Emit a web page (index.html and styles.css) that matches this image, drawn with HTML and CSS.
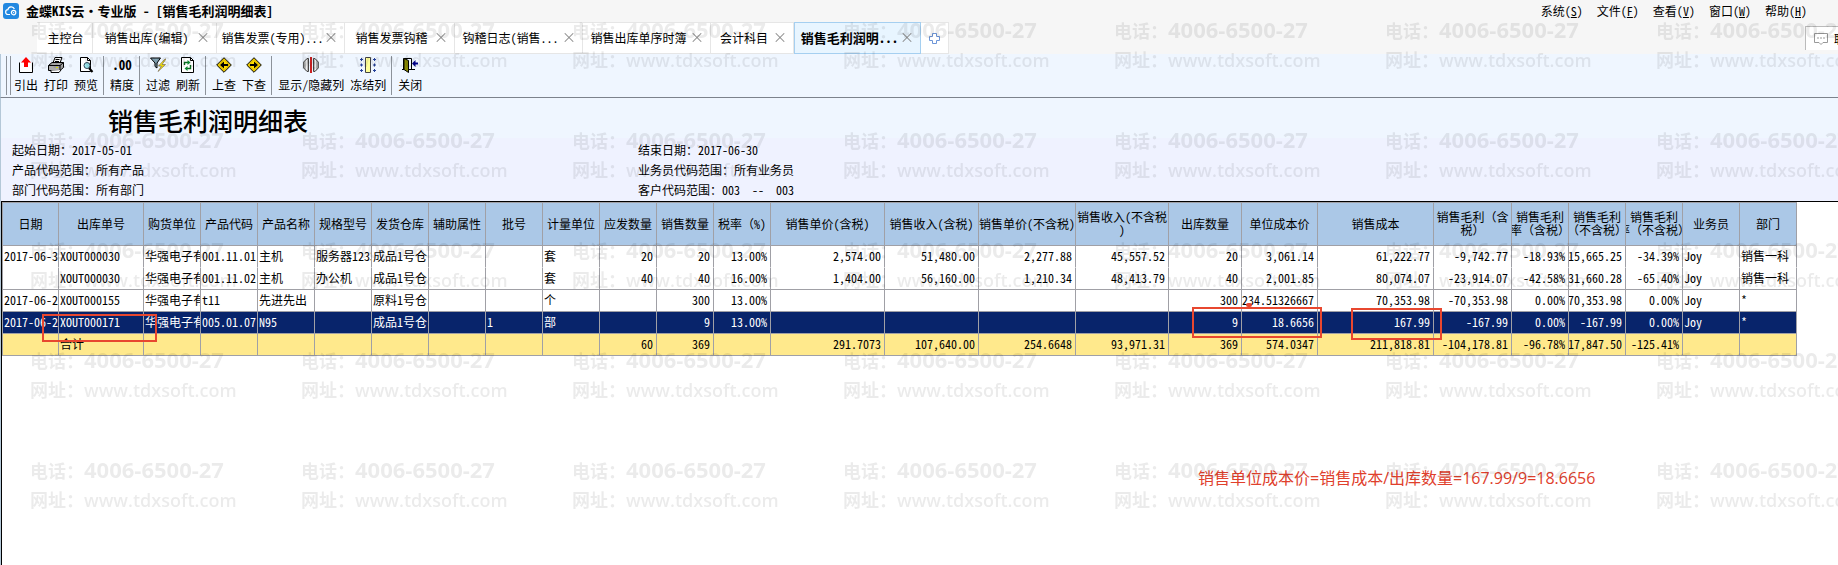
FILE: index.html
```
<!DOCTYPE html>
<html lang="zh-CN">
<head>
    <meta charset="UTF-8">
    <meta name="viewport" content="width=device-width, initial-scale=1.0">
    <title>销售毛利润明细表</title>
    <link rel="stylesheet" href="styles.css">
</head>
<body>
    <header class="titlebar">
        <svg class="logo" width="16" height="16" viewBox="0 0 16 16">
            <rect width="16" height="16" rx="3" fill="#2288e0"/>
            <path d="M7 11.5H5.2a2.4 2.4 0 0 1-.3-4.8A3.4 3.4 0 0 1 11.4 6" fill="none" stroke="#fff" stroke-width="1.2"/>
            <circle cx="10.6" cy="9.6" r="2.2" fill="none" stroke="#fff" stroke-width="1.2"/>
            <circle cx="10.6" cy="9.6" r="0.7" fill="#fff"/>
        </svg>
        <h1>金蝶KIS云<span class="fullwidth">・</span>专业版 - [销售毛利润明细表]</h1>
        <nav class="menu">
            <button>系统(<u>S</u>)</button>
            <button>文件(<u>F</u>)</button>
            <button>查看(<u>V</u>)</button>
            <button>窗口(<u>W</u>)</button>
            <button>帮助(<u>H</u>)</button>
        </nav>
    </header>

    <div class="tabbar">
        <div class="tabs">
            <div class="tab"><button class="tab-label">主控台</button></div>
            <div class="tab"><button class="tab-label">销售出库(编辑)</button><button class="tab-close" aria-label="关闭"></button></div>
            <div class="tab"><button class="tab-label">销售发票(专用)...</button><button class="tab-close" aria-label="关闭"></button></div>
            <div class="tab"><button class="tab-label">销售发票钩稽</button><button class="tab-close" aria-label="关闭"></button></div>
            <div class="tab"><button class="tab-label">钩稽日志(销售...</button><button class="tab-close" aria-label="关闭"></button></div>
            <div class="tab"><button class="tab-label">销售出库单序时簿</button><button class="tab-close" aria-label="关闭"></button></div>
            <div class="tab"><button class="tab-label">会计科目</button><button class="tab-close" aria-label="关闭"></button></div>
            <div class="tab active"><button class="tab-label">销售毛利润明...</button><button class="tab-close" aria-label="关闭"></button></div>
            <div class="tab">
                <button class="tab-new" aria-label="新建">
                    <svg width="11" height="11" viewBox="0 0 11 11"><path d="M3.5.5h4v3h3v4h-3v3h-4v-3h-3v-4h3z" fill="#fff" stroke="#6d95d8"/></svg>
                </button>
            </div>
        </div>
        <button class="contact">
            <svg width="14" height="12" viewBox="0 0 14 12"><path d="M.5.5h13v9H9L7 11.500 5 9.500H.5z" fill="#fff" stroke="#999"/><path d="M3 5h2M6 5h2M9 5h2" stroke="#999"/></svg>
            联系客服
        </button>
    </div>

    <div class="toolbar">
        <span class="grip"></span>
        <button>
            <svg width="16" height="16" viewBox="0 0 16 16"><path d="M1.500 5.500v10h13v-10" fill="#fff" stroke="#000"/><path d="M8 0l5 5.500h-3V10H6V5.500H3z" fill="#f00"/></svg>
            引出
        </button>
        <button>
            <svg width="16" height="16" viewBox="0 0 16 16"><path d="M5 6l2-5.500h7L12 6" fill="#fff" stroke="#000"/><path d="M7.500 2.500h4M7 4.500h4" stroke="#000"/><path d="M.5 8.500L4 5.500h11.500v5L12 13.500H.5z" fill="#aaa" stroke="#000"/><path d="M.5 8.500H12l3.500-3M12 8.500v5" fill="none" stroke="#000"/><path d="M3 13.500v2h8l2-2.500" fill="#fff" stroke="#000"/><path d="M8 10.500h2" stroke="#ee0"/></svg>
            打印
        </button>
        <button>
            <svg width="16" height="16" viewBox="0 0 16 16"><path d="M2.500.5h7l3 3v11h-10z" fill="#fff" stroke="#000"/><path d="M9.500.5v3h3" fill="none" stroke="#000"/><circle cx="9" cy="8.500" r="3" fill="#9de8ee" stroke="#345"/><path d="M11 11l3.500 4" stroke="#000" stroke-width="2"/></svg>
            预览
        </button>
        <span class="sep"></span>
        <button>
            <span class="decimals">.00</span>
            精度
        </button>
        <span class="sep"></span>
        <button>
            <svg width="16" height="16" viewBox="0 0 16 16"><path d="M.5 1h10L7 6v5L5 9.500V6z" fill="#8ab" stroke="#000"/><path d="M15 2L8.500 9h3L8 14.500 15.500 7.500h-3.500L16 2z" fill="#fe0" stroke="#765" stroke-width="0.7"/></svg>
            过滤
        </button>
        <button>
            <svg width="16" height="16" viewBox="0 0 16 16"><path d="M1.500.5h9l3 3v12h-12z" fill="#fff" stroke="#000"/><path d="M10.500.5v3h3" fill="none" stroke="#000"/><path d="M4.500 8V5.500h4M10.500 8v3.500h-4" fill="none" stroke="#0a6a20" stroke-width="1.400"/><path d="M7.500 3l3 2.500-3 2.500zM7.500 9l-3 2.500 3 2.500z" fill="#0a8a30"/></svg>
            刷新
        </button>
        <span class="sep"></span>
        <button>
            <svg width="16" height="16" viewBox="0 0 16 16"><path d="M8 .7L15.300 8 8 15.300.7 8z" fill="#fd0" stroke="#000"/><path d="M8 2.500L13.500 8 8 13.500 2.500 8z" fill="none" stroke="#a80" stroke-width="0.600"/><path d="M4 8l4-3.500V7h4v2H8v2.500z"/></svg>
            上查
        </button>
        <button>
            <svg width="16" height="16" viewBox="0 0 16 16"><path d="M8 .7L15.300 8 8 15.300.7 8z" fill="#fd0" stroke="#000"/><path d="M8 2.500L13.500 8 8 13.500 2.500 8z" fill="none" stroke="#a80" stroke-width="0.600"/><path d="M12 8L8 4.500V7H4v2h4v2.500z"/></svg>
            下查
        </button>
        <span class="sep"></span>
        <button>
            <svg width="16" height="16" viewBox="0 0 16 16"><path d="M5.500 1.500v13H4L.7 11V5L4 1.500zM10.500 1.500v13H12l3.300-3.500V5L12 1.500z" fill="#bbb" stroke="#444"/><path d="M3.500 3v10M12.500 3v10" stroke="#eee"/><path d="M8 0v16" stroke="#c22" stroke-width="2"/></svg>
            显示/隐藏列
        </button>
        <button>
            <svg width="16" height="16" viewBox="0 0 16 16"><path d="M5.500.5h5v15h-5z" fill="#ff9" stroke="#444"/><path d="M0 2.500h3M1.500 1v3M0 8h3M1.500 6.500v3M0 13.500h3M1.500 12v3M13 2.500h3M14.500 1v3M13 8h3M14.500 6.500v3M13 13.500h3M14.500 12v3" stroke="#24409a"/></svg>
            冻结列
        </button>
        <span class="sep"></span>
        <button>
            <svg width="16" height="16" viewBox="0 0 16 16"><path d="M1.500 12.500V1.500h8v11M0 12.500h2M7 12.500h6" fill="none" stroke="#000"/><path d="M2 1.500l4.500 2V15.500L2 12.500z" fill="#880" stroke="#000"/><path d="M10 6.500l3.500-3.500v2.500H16v2h-2.500V10z" fill="#008"/></svg>
            关闭
        </button>
    </div>

    <main class="report">
        <div class="report-head">
            <h2>销售毛利润明细表</h2>
            <div class="params">
                <p>起始日期：2017-05-01</p>
                <p>结束日期：2017-06-30</p>
                <p>产品代码范围：所有产品</p>
                <p>业务员代码范围：所有业务员</p>
                <p>部门代码范围：所有部门</p>
                <p>客户代码范围：003&nbsp; --&nbsp; 003</p>
            </div>
        </div>

        <div class="sheet">
            <table>
                <colgroup>
                    <col class="w56"><col class="w85"><col span="11" class="w57">
                    <col class="w114"><col class="w94"><col class="w97"><col class="w93">
                    <col class="w73"><col class="w76"><col class="w116"><col class="w78">
                    <col span="5" class="w57">
                </colgroup>
                <thead>
                    <tr>
                        <th>日期</th>
                        <th>出库单号</th>
                        <th>购货单位</th>
                        <th>产品代码</th>
                        <th>产品名称</th>
                        <th>规格型号</th>
                        <th>发货仓库</th>
                        <th>辅助属性</th>
                        <th>批号</th>
                        <th>计量单位</th>
                        <th>应发数量</th>
                        <th>销售数量</th>
                        <th>税率<span class="fullwidth">（</span>%)</th>
                        <th>销售单价(含税)</th>
                        <th>销售收入(含税)</th>
                        <th>销售单价(不含税)</th>
                        <th>销售收入(不含税<br>)</th>
                        <th>出库数量</th>
                        <th>单位成本价</th>
                        <th>销售成本</th>
                        <th class="fullwidth">销售毛利（含<br>税）</th>
                        <th class="fullwidth"><div class="clip-center"><span>销售毛利<br>率（含税）</span></div></th>
                        <th class="fullwidth"><div class="clip-center"><span>销售毛利<br>（不含税）</span></div></th>
                        <th class="fullwidth"><div class="clip-center"><span>销售毛利<br>率（不含税）</span></div></th>
                        <th>业务员</th>
                        <th>部门</th>
                    </tr>
                </thead>
                <tbody>
                    <tr class="joined">
                        <td>2017-06-30</td><td>XOUT000030</td><td>华强电子有限公司</td><td>001.11.01</td><td>主机</td><td>服务器1233</td><td>成品1号仓</td><td></td><td></td><td>套</td>
                        <td class="num">20</td><td class="num">20</td><td class="num">13.00%</td><td class="num">2,574.00</td><td class="num">51,480.00</td><td class="num">2,277.88</td><td class="num">45,557.52</td>
                        <td class="num">20</td><td class="num">3,061.14</td><td class="num">61,222.77</td><td class="num">-9,742.77</td><td class="num">-18.93%</td><td class="num"><div class="clip-left">-15,665.25</div></td><td class="num">-34.39%</td><td>Joy</td><td>销售一科</td>
                    </tr>
                    <tr>
                        <td></td><td>XOUT000030</td><td>华强电子有限公司</td><td>001.11.02</td><td>主机</td><td>办公机</td><td>成品1号仓</td><td></td><td></td><td>套</td>
                        <td class="num">40</td><td class="num">40</td><td class="num">16.00%</td><td class="num">1,404.00</td><td class="num">56,160.00</td><td class="num">1,210.34</td><td class="num">48,413.79</td>
                        <td class="num">40</td><td class="num">2,001.85</td><td class="num">80,074.07</td><td class="num">-23,914.07</td><td class="num">-42.58%</td><td class="num"><div class="clip-left">-31,660.28</div></td><td class="num">-65.40%</td><td>Joy</td><td>销售一科</td>
                    </tr>
                    <tr>
                        <td>2017-06-28</td><td>XOUT000155</td><td>华强电子有限公司</td><td>t11</td><td>先进先出</td><td></td><td>原料1号仓</td><td></td><td></td><td>个</td>
                        <td></td><td class="num">300</td><td class="num">13.00%</td><td></td><td></td><td></td><td></td>
                        <td class="num">300</td><td class="num">234.51326667</td><td class="num">70,353.98</td><td class="num">-70,353.98</td><td class="num">0.00%</td><td class="num"><div class="clip-left">-70,353.98</div></td><td class="num">0.00%</td><td>Joy</td><td>*</td>
                    </tr>
                    <tr class="selected">
                        <td>2017-06-28</td><td>XOUT000171</td><td>华强电子有限公司</td><td>005.01.07</td><td>N95</td><td></td><td>成品1号仓</td><td></td><td>1</td><td>部</td>
                        <td></td><td class="num">9</td><td class="num">13.00%</td><td></td><td></td><td></td><td></td>
                        <td class="num">9</td><td class="num">18.6656</td><td class="num">167.99</td><td class="num">-167.99</td><td class="num">0.00%</td><td class="num">-167.99</td><td class="num">0.00%</td><td>Joy</td><td>*</td>
                    </tr>
                </tbody>
                <tfoot>
                    <tr>
                        <td></td><td>合计</td><td></td><td></td><td></td><td></td><td></td><td></td><td></td><td></td>
                        <td class="num">60</td><td class="num">369</td><td></td><td class="num">291.7073</td><td class="num">107,640.00</td><td class="num">254.6648</td><td class="num">93,971.31</td>
                        <td class="num">369</td><td class="num">574.0347</td><td class="num">211,818.81</td><td class="num">-104,178.81</td><td class="num">-96.78%</td><td class="num"><div class="clip-left">-117,847.50</div></td><td class="num">-125.41%</td><td></td><td></td>
                    </tr>
                </tfoot>
            </table>

            <div class="mark mark-order"></div>
            <div class="mark mark-price"></div>
            <div class="mark mark-cost"></div>
            <div class="dot"></div>
            <p class="note">销售单位成本价=销售成本/出库数量=167.99/9=18.6656</p>
        </div>
    </main>

    <svg class="watermark" width="100%" height="100%" aria-hidden="true">
        <defs>
            <pattern id="wm" x="30" y="20" width="271" height="110" patternUnits="userSpaceOnUse">
                <text class="wm-label" x="0" y="18">电话：</text>
                <text class="wm-phone" x="54" y="18">4006-6500-27</text>
                <text class="wm-label" x="0" y="47">网址：</text>
                <text class="wm-site" x="54" y="47">www.tdxsoft.com</text>
            </pattern>
        </defs>
        <rect width="100%" height="100%" fill="url(#wm)"/>
    </svg>
</body>
</html>
```
FILE: styles.css
```
* {
    margin: 0;
    padding: 0;
    box-sizing: border-box;
}

body {
    display: flex;
    flex-direction: column;
    height: 100vh;
    overflow: hidden;
    font-family: "Noto Sans CJK SC", sans-serif;
    font-feature-settings: "hwid";
    font-size: 12px;
    line-height: 16px;
    color: #000;
    background: #fff;
}

button {
    font: inherit;
    font-feature-settings: inherit;
    color: inherit;
    background: none;
    border: none;
    white-space: nowrap;
    cursor: pointer;
}

svg {
    display: block;
    flex: none;
}

.fullwidth {
    font-feature-settings: normal;
}

/* title bar */
.titlebar {
    display: flex;
    align-items: center;
    height: 22px;
    padding: 0 31px 0 3px;
    background: #f6f6f6;
}

.titlebar h1 {
    flex: 1;
    margin-left: 7px;
    font-size: 13px;
    font-weight: bold;
    white-space: nowrap;
}

.menu {
    display: flex;
    gap: 14px;
}

/* tabs */
.tabbar {
    display: flex;
    justify-content: space-between;
    height: 32px;
    padding-left: 37px;
    background: #f6f6f6;
}

.tabs {
    display: grid;
    grid-template-columns: 56px 124px 128px 110px 128px 128px 83px 127px 28px;
}

.tab {
    display: flex;
    align-items: center;
    background: #fff;
    border: 1px solid #e6e6e6;
    border-left: none;
}

.tab-label {
    flex: 1;
    height: 100%;
    padding: 0 0 1px 2px;
}

.tab-close {
    position: relative;
    width: 10px;
    height: 10px;
    margin-right: 8px;
}

.tab-close::before,
.tab-close::after {
    content: "";
    position: absolute;
    top: 4px;
    left: -1px;
    width: 12px;
    height: 1px;
    background: #888;
    transform: rotate(45deg);
}

.tab-close::after {
    transform: rotate(-45deg);
}

.tab.active {
    background: #e8f5ff;
    border: 1px solid #a5cff0;
    font-size: 13px;
    font-weight: bold;
}

.tab-new {
    display: flex;
    align-items: center;
    justify-content: center;
    width: 100%;
    height: 100%;
}

.contact {
    display: flex;
    align-items: center;
    gap: 6px;
    width: 33px;
    height: 24px;
    margin-top: 4px;
    padding-left: 8px;
    overflow: hidden;
    background: #fff;
    border-top: 1px solid #bbb;
    border-left: 1px solid #bbb;
}

/* toolbar */
.toolbar {
    display: flex;
    height: 44px;
    padding: 2px 0 2px 5px;
    background: #eff6ff;
    border-left: 1px solid #b4c8d8;
    border-bottom: 1px solid #7c828c;
}

.toolbar button {
    display: flex;
    flex-direction: column;
    align-items: center;
    gap: 4px;
    padding: 1px 3px;
}

.grip {
    width: 5px;
    border: 1px solid #8c929a;
    border-top: none;
    border-bottom: none;
}

.sep {
    width: 1px;
    margin: 0 3px 0 2px;
    background: #8c929a;
}

.decimals {
    height: 16px;
    font-size: 13px;
    font-weight: bold;
}

/* report header */
.report {
    flex: 1;
    display: flex;
    flex-direction: column;
    border-left: 1px solid #b4c8d8;
}

.report-head {
    height: 103px;
    padding: 8px 11px 0;
    background: linear-gradient(#eff6ff 40px, #eff2ff 40px);
}

.report-head h2 {
    margin: 0 96px 6px;
    font-size: 25px;
    font-weight: 500;
    line-height: 28px;
}

.params {
    display: grid;
    grid-template-columns: 626px 1fr;
    line-height: 20px;
}

/* data grid */
.sheet {
    position: relative;
    flex: 1;
    overflow: hidden;
    border-top: 1px solid #000;
    border-left: 1px solid #000;
}

table {
    width: 1794px;
    table-layout: fixed;
    border-collapse: separate;
    border-spacing: 0;
    border-top: 1px solid #a0a0a6;
    border-left: 1px solid #a0a0a6;
}

.w56 { width: 56px; }
.w57 { width: 57px; }
.w73 { width: 73px; }
.w76 { width: 76px; }
.w78 { width: 78px; }
.w85 { width: 85px; }
.w93 { width: 93px; }
.w94 { width: 94px; }
.w97 { width: 97px; }
.w114 { width: 114px; }
.w116 { width: 116px; }

th,
td {
    overflow: hidden;
    white-space: nowrap;
    border-right: 1px solid #a0a0a6;
    border-bottom: 1px solid #a0a0a6;
}

th {
    height: 43px;
    padding-bottom: 2px;
    font-weight: normal;
    line-height: 13px;
    background: #abc8e7;
}

td {
    height: 22px;
    padding: 0 0 2px 1px;
    text-align: left;
}

.num {
    padding: 0 3px 2px 0;
    text-align: right;
}

.clip-center {
    display: flex;
    justify-content: center;
}

.clip-left {
    display: flex;
    justify-content: flex-end;
    overflow: hidden;
}

.joined td {
    border-bottom-color: transparent;
}

.selected td {
    color: #fff;
    background: #08246b;
}

tfoot td {
    background: #ffe98c;
}

/* review marks over the grid */
.mark {
    position: absolute;
    border: 2px solid #e8472f;
}

.mark-order {
    top: 112px;
    left: 40px;
    width: 115px;
    height: 28px;
}

.mark-price {
    top: 105px;
    left: 1190px;
    width: 130px;
    height: 31px;
}

.mark-cost {
    top: 106px;
    left: 1349px;
    width: 91px;
    height: 32px;
}

.dot {
    position: absolute;
    top: 101px;
    left: 1244px;
    width: 6px;
    height: 4px;
    background: #e8472f;
    border-radius: 2px;
}

.note {
    position: absolute;
    top: 264px;
    left: 1196px;
    font-family: "Open Sans", "Noto Sans CJK SC", sans-serif;
    font-feature-settings: normal;
    font-size: 16px;
    line-height: 24px;
    color: #e0402c;
    white-space: nowrap;
}

/* watermark */
.watermark {
    position: fixed;
    inset: 0;
    pointer-events: none;
    opacity: 0.08;
    font-feature-settings: normal;
}

.wm-label {
    font-size: 18px;
    font-weight: bold;
}

.wm-phone {
    font-family: "Open Sans", sans-serif;
    font-size: 22px;
    font-weight: bold;
}

.wm-site {
    font-family: "Open Sans", sans-serif;
    font-size: 18px;
    font-weight: 600;
}
```
